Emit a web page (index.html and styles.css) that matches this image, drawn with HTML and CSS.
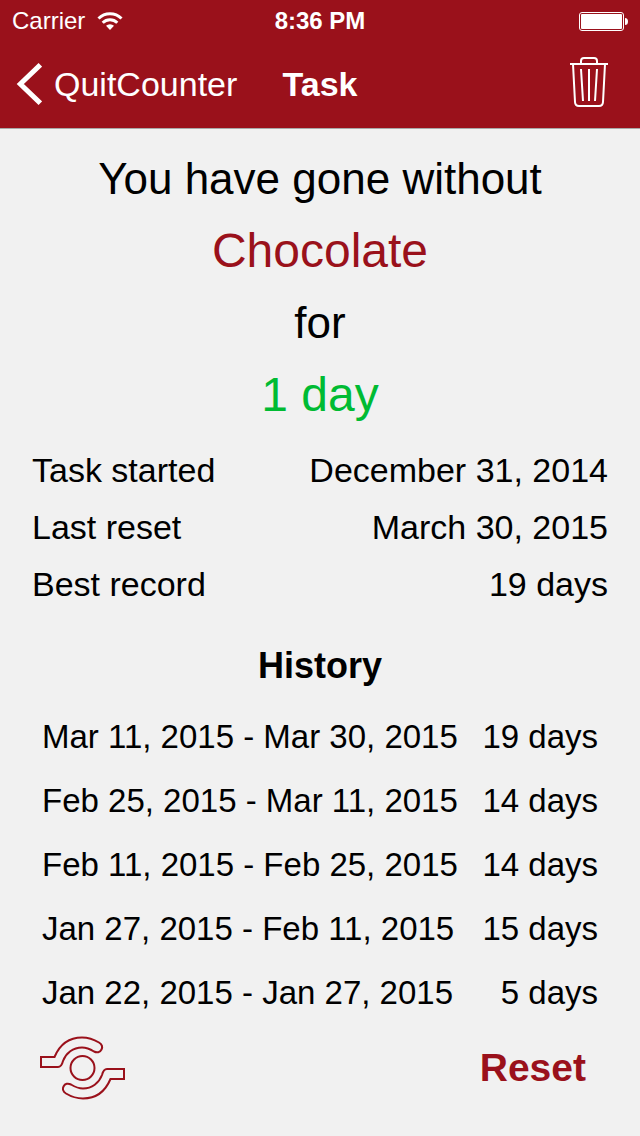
FILE: index.html
```html
<!DOCTYPE html>
<html lang="en">
<head>
    <meta charset="UTF-8">
    <meta name="viewport" content="width=device-width, initial-scale=1.0">
    <title>QuitCounter - Task</title>
    <link rel="stylesheet" href="styles.css">
</head>
<body>
    <header class="top">
        <div class="status-bar">
            <div class="carrier">
                <span>Carrier</span>
                <svg width="26" height="20" viewBox="0 0 26 20" fill="none" stroke="#fff" stroke-width="3">
                    <path d="M1.5 7.5a16.2 16.2 0 0 1 23 0"/>
                    <path d="M5.7 11.7a10.4 10.4 0 0 1 14.6 0"/>
                    <path d="M13 19l-4-4.2a5.8 5.8 0 0 1 8 0z" fill="#fff" stroke="none"/>
                </svg>
            </div>
            <span class="time">8:36 PM</span>
            <div class="battery">
                <svg width="49" height="19" viewBox="0 0 49 19">
                    <rect x=".5" y=".5" width="44" height="18" rx="2.5" fill="none" stroke="#fff"/>
                    <rect x="2" y="2" width="41" height="15" rx="1" fill="#fff"/>
                    <path d="M46 6q3 0 3 3.500t-3 3.500z" fill="#fff"/>
                </svg>
            </div>
        </div>
        <nav class="nav-bar">
            <a class="back" href="#">
                <svg width="26" height="42" viewBox="0 0 26 42" fill="none" stroke="#fff" stroke-width="5">
                    <path d="M24.300 1.800L4.300 21l20 19.200"/>
                </svg>
                <span>QuitCounter</span>
            </a>
            <h1>Task</h1>
            <button class="delete" type="button" aria-label="Delete task">
                <svg width="38" height="50" viewBox="0 0 38 50" fill="none" stroke="#fff" stroke-width="2">
                    <path d="M0 7h38M11 7V4q0-3 3-3h10q3 0 3 3v3"/>
                    <path d="M3 7l2 38q.2 4 4 4h20q3.800 0 4-4l2-38"/>
                    <path d="M11 12l2 32M19 12v32M27 12l-2 32"/>
                </svg>
            </button>
        </nav>
    </header>

    <main>
        <section class="summary">
            <p>You have gone without</p>
            <p class="task-name">Chocolate</p>
            <p>for</p>
            <p class="duration">1 day</p>
        </section>

        <dl class="details">
            <div class="row">
                <dt>Task started</dt>
                <dd>December 31, 2014</dd>
            </div>
            <div class="row">
                <dt>Last reset</dt>
                <dd>March 30, 2015</dd>
            </div>
            <div class="row">
                <dt>Best record</dt>
                <dd>19 days</dd>
            </div>
        </dl>

        <section class="history">
            <h2>History</h2>
            <table>
                <tbody>
                    <tr><td>Mar 11, 2015 - Mar 30, 2015</td><td>19 days</td></tr>
                    <tr><td>Feb 25, 2015 - Mar 11, 2015</td><td>14 days</td></tr>
                    <tr><td>Feb 11, 2015 - Feb 25, 2015</td><td>14 days</td></tr>
                    <tr><td>Jan 27, 2015 - Feb 11, 2015</td><td>15 days</td></tr>
                    <tr><td>Jan 22, 2015 - Jan 27, 2015</td><td>5 days</td></tr>
                </tbody>
            </table>
        </section>
    </main>

    <footer class="actions">
        <button class="share" type="button" aria-label="Share">
            <svg width="86" height="64" viewBox="0 0 86 64" fill="none" stroke="#9a111b" stroke-width="2">
                <circle cx="42.500" cy="32" r="12"/>
                <path id="arm" d="M1 21H14.500C20 8 30 1.500 42 1.500C49 1.500 54 3.500 59 6.500C62 8.500 62.800 11 61.500 13.500C60 16.500 57 17 54 15.500C50 13 47 11.500 42 11.500C33 11.500 26 17 23 25C22 29 21 31 18 31H1Z"/>
                <use href="#arm" transform="rotate(180 42.500 32)"/>
            </svg>
        </button>
        <button class="reset" type="button">Reset</button>
    </footer>
</body>
</html>
```
FILE: styles.css
```css
:root {
    --red: #9a111b;
    --green: #00bb33;
    --bg: #f1f1f1;
}

* {
    margin: 0;
    padding: 0;
    box-sizing: border-box;
}

body {
    font-family: 'Liberation Sans', Arial, sans-serif;
    font-size: 34px;
    background-color: var(--bg);
    color: #000;
    min-height: 100vh;
    display: flex;
    flex-direction: column;
}

button {
    background: none;
    border: none;
    font-family: inherit;
    cursor: pointer;
}

svg {
    display: block;
}

/* Header */
.top {
    background-color: var(--red);
    color: white;
    border-bottom: 1px solid #a9a9a9;
}

.status-bar {
    display: grid;
    grid-template-columns: 1fr auto 1fr;
    align-items: center;
    height: 40px;
    padding: 2px 12px 0;
    font-size: 24px;
}

.carrier {
    display: flex;
    align-items: center;
    gap: 12px;
}

.time {
    font-weight: bold;
}

.battery {
    justify-self: end;
}

.nav-bar {
    display: grid;
    grid-template-columns: 1fr auto 1fr;
    align-items: center;
    height: 88px;
    padding: 0 16px;
}

.back {
    display: flex;
    align-items: center;
    gap: 12px;
    color: white;
    text-decoration: none;
}

.nav-bar h1 {
    font-size: 34px;
}

.delete {
    justify-self: end;
    padding: 0 16px 4px;
}

/* Summary */
main {
    flex: 1;
}

.summary {
    padding-top: 14px;
    text-align: center;
    font-size: 44px;
    line-height: 72px;
}

.task-name {
    font-size: 48px;
    color: var(--red);
}

.duration {
    font-size: 48px;
    color: var(--green);
}

/* Details */
.details {
    padding: 11px 32px 0;
    line-height: 57px;
}

.row {
    display: flex;
    justify-content: space-between;
}

/* History */
.history {
    padding: 21px 42px 0;
}

.history h2 {
    font-size: 36px;
    line-height: 64px;
    text-align: center;
}

.history table {
    width: 100%;
    margin-top: 7px;
    border-collapse: collapse;
    font-size: 33px;
    line-height: 64px;
}

.history td {
    white-space: nowrap;
}

.history td:last-child {
    text-align: right;
}

/* Bottom buttons */
.actions {
    display: flex;
    justify-content: space-between;
    align-items: center;
    padding: 0 54px 36px 40px;
}

.reset {
    font-size: 39px;
    font-weight: bold;
    color: var(--red);
}
```
